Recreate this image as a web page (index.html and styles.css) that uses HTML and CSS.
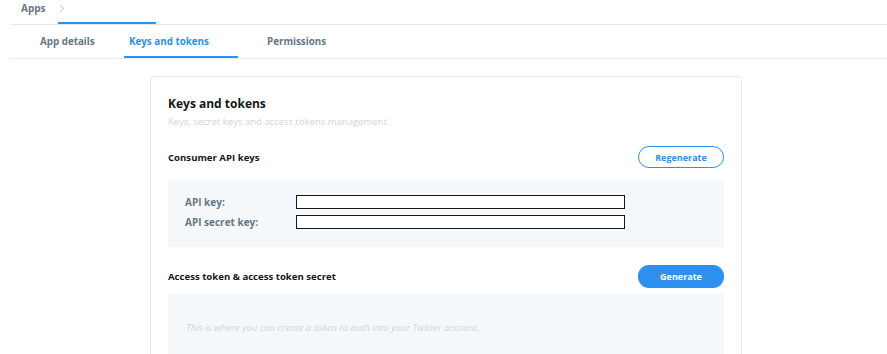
FILE: index.html
```html
<!DOCTYPE html>
<html lang="en">
  <head>
    <meta charset="UTF-8" />
    <title>Keys and tokens</title>
    <link rel="stylesheet" href="styles.css">
  </head>
  <body>
    <header class="crumbs">
      <a href="#" class="crumb">Apps</a>
      <div class="crumb-current">
        <svg class="chevron" width="6" height="9" viewBox="0 0 6 9">
          <path d="M1 1 L4.5 4.5 L1 8" fill="none" stroke="#ccd6dd" stroke-width="1.2" />
        </svg>
      </div>
    </header>

    <nav class="tabs">
      <a href="#" class="tab tab-first">App details</a>
      <a href="#" class="tab tab-active">Keys and tokens</a>
      <a href="#" class="tab tab-last">Permissions</a>
    </nav>

    <section class="card">
      <h2 class="card-title">Keys and tokens</h2>
      <p class="card-sub">Keys, secret keys and access tokens management.</p>

      <div class="row">
        <h3 class="row-title">Consumer API keys</h3>
        <button class="btn btn-outline">Regenerate</button>
      </div>
      <div class="panel keys">
        <div class="key-line">
          <span class="key-label">API key:</span>
          <span class="key-box"></span>
        </div>
        <div class="key-line">
          <span class="key-label">API secret key:</span>
          <span class="key-box"></span>
        </div>
      </div>

      <div class="row row-second">
        <h3 class="row-title">Access token &amp; access token secret</h3>
        <button class="btn btn-fill">Generate</button>
      </div>
      <div class="panel empty">
        <p class="hint">This is where you can create a token to auth into your Twitter account.</p>
      </div>
    </section>
  </body>
</html>
```

FILE: styles.css
```css
body {
  font-family: "Open Sans", "DejaVu Sans", sans-serif;
  background: #ffffff;
  color: #14171a;
  margin: 0;
  height: 354px;
  overflow: hidden;
}

a {
  text-decoration: none;
}

.crumbs {
  display: flex;
  height: 24px;
  margin-left: 10px;
  padding-left: 11px;
  border-bottom: 1px solid #e6ecf0;
}

.crumb {
  font-size: 10px;
  font-weight: 700;
  color: #657786;
  line-height: 16px;
}

.crumb-current {
  width: 98px;
  margin-left: 12px;
  border-bottom: 2px solid #2f8fee;
  box-sizing: border-box;
  height: 24px;
}

.chevron {
  display: block;
  margin-top: 4px;
  margin-left: 1px;
}

.tabs {
  display: flex;
  margin-left: 10px;
  padding-left: 30px;
  border-bottom: 1px solid #e6ecf0;
}

.tab {
  display: block;
  height: 33px;
  line-height: 34px;
  box-sizing: border-box;
  font-size: 9.8px;
  font-weight: 700;
  color: #657786;
}

.tab-first {
  width: 84px;
}

.tab-active {
  width: 114px;
  padding-left: 5px;
  color: #2f8fee;
  border-bottom: 2px solid #2f8fee;
}

.tab-last {
  margin-left: 29px;
}

.card {
  width: 592px;
  box-sizing: border-box;
  margin: 17px 0 0 150px;
  padding: 18px 17px 0;
  border: 1px solid #e1e8ed;
  border-radius: 4px;
  height: 300px;
}

.card-title {
  margin: 0;
  font-size: 12px;
  line-height: 18px;
  font-weight: 700;
}

.card-sub {
  margin: 2px 0 0;
  font-size: 9.5px;
  line-height: 14px;
  color: #ccd6dd;
}

.row {
  display: flex;
  justify-content: space-between;
  align-items: center;
  margin-top: 17px;
}

.row-second {
  margin-top: 18px;
}

.row-title {
  margin: 0;
  font-size: 9.6px;
  font-weight: 700;
}

.btn {
  width: 86px;
  height: 22px;
  border-radius: 11px;
  font-family: inherit;
  font-size: 9px;
  font-weight: 700;
  cursor: pointer;
}

.btn-outline {
  background: #ffffff;
  color: #2f8fee;
  border: 1px solid #2f8fee;
}

.btn-fill {
  background: #2f8fee;
  color: #ffffff;
  border: none;
  height: 23px;
}

.panel {
  background: #f5f8fa;
  margin-top: 12px;
}

.keys {
  padding: 15px 17px 18px;
  display: flex;
  flex-direction: column;
  gap: 6px;
}

.key-line {
  display: flex;
  align-items: center;
}

.key-label {
  width: 111px;
  font-size: 10px;
  font-weight: 700;
  color: #657786;
}

.key-box {
  width: 329px;
  height: 14px;
  box-sizing: border-box;
  background: #ffffff;
  border: 1px solid #14171a;
}

.empty {
  margin-top: 6px;
  height: 70px;
  padding: 27px 18px 0;
  box-sizing: border-box;
}

.hint {
  margin: 0;
  font-size: 9.5px;
  font-style: italic;
  color: #ccd6dd;
}
```
